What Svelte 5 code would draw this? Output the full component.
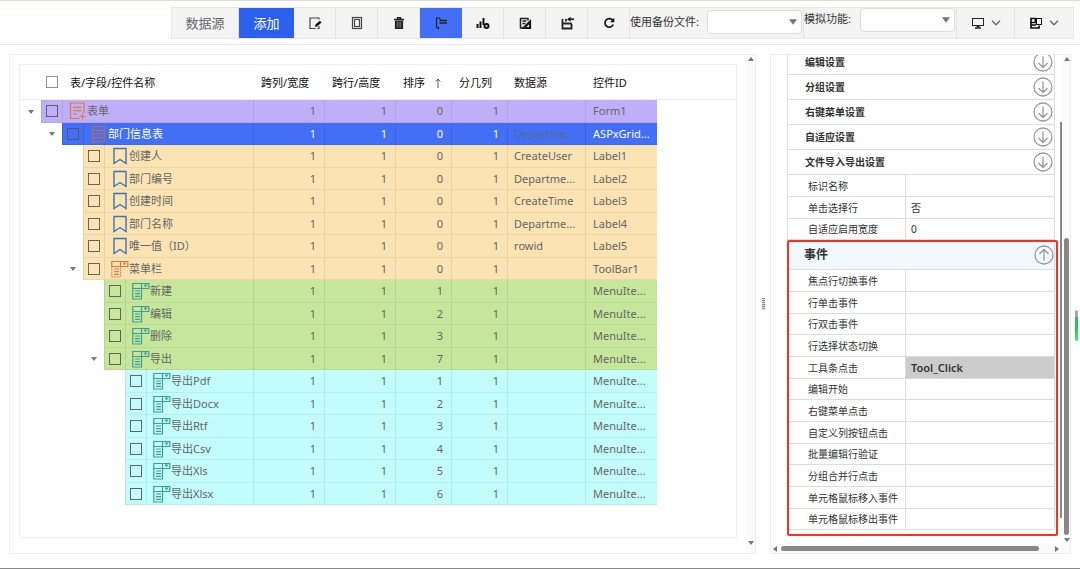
<script lang="ts">
  type Row = {
    level: number;
    icon: string;
    name: string;
    tone: string;
    order: number;
    source?: string;
    id: string;
    open?: boolean;
  };

  const rows: Row[] = [
    { level: 0, icon: "form", name: "表单", tone: "purple", order: 0, id: "Form1", open: true },
    { level: 1, icon: "grid", name: "部门信息表", tone: "blue", order: 0, source: "Departme...", id: "ASPxGrid...", open: true },
    { level: 2, icon: "field", name: "创建人", tone: "sand", order: 0, source: "CreateUser", id: "Label1" },
    { level: 2, icon: "field", name: "部门编号", tone: "sand", order: 0, source: "Departme...", id: "Label2" },
    { level: 2, icon: "field", name: "创建时间", tone: "sand", order: 0, source: "CreateTime", id: "Label3" },
    { level: 2, icon: "field", name: "部门名称", tone: "sand", order: 0, source: "Departme...", id: "Label4" },
    { level: 2, icon: "field", name: "唯一值（ID）", tone: "sand", order: 0, source: "rowid", id: "Label5" },
    { level: 2, icon: "bar", name: "菜单栏", tone: "sand", order: 0, id: "ToolBar1", open: true },
    { level: 3, icon: "menu", name: "新建", tone: "green", order: 1, id: "MenuIte..." },
    { level: 3, icon: "menu", name: "编辑", tone: "green", order: 2, id: "MenuIte..." },
    { level: 3, icon: "menu", name: "删除", tone: "green", order: 3, id: "MenuIte..." },
    { level: 3, icon: "menu", name: "导出", tone: "green", order: 7, id: "MenuIte...", open: true },
    { level: 4, icon: "menu", name: "导出Pdf", tone: "cyan", order: 1, id: "MenuIte..." },
    { level: 4, icon: "menu", name: "导出Docx", tone: "cyan", order: 2, id: "MenuIte..." },
    { level: 4, icon: "menu", name: "导出Rtf", tone: "cyan", order: 3, id: "MenuIte..." },
    { level: 4, icon: "menu", name: "导出Csv", tone: "cyan", order: 4, id: "MenuIte..." },
    { level: 4, icon: "menu", name: "导出Xls", tone: "cyan", order: 5, id: "MenuIte..." },
    { level: 4, icon: "menu", name: "导出Xlsx", tone: "cyan", order: 6, id: "MenuIte..." },
  ];

  const sections = ["编辑设置", "分组设置", "右键菜单设置", "自适应设置", "文件导入导出设置"];

  const settings = [
    { name: "标识名称", value: "" },
    { name: "单击选择行", value: "否" },
    { name: "自适应启用宽度", value: "0" },
  ];

  const events = [
    { name: "焦点行切换事件", value: "" },
    { name: "行单击事件", value: "" },
    { name: "行双击事件", value: "" },
    { name: "行选择状态切换", value: "" },
    { name: "工具条点击", value: "Tool_Click" },
    { name: "编辑开始", value: "" },
    { name: "右键菜单点击", value: "" },
    { name: "自定义列按钮点击", value: "" },
    { name: "批量编辑行验证", value: "" },
    { name: "分组合并行点击", value: "" },
    { name: "单元格鼠标移入事件", value: "" },
    { name: "单元格鼠标移出事件", value: "" },
  ];

  const tools = ["edit", "frame", "trash", "tree", "chart", "design", "export", "refresh"];
</script>

{#snippet toolIcon(name: string)}
  <svg width="14" height="14" viewBox="0 0 14 14" fill="none" stroke="#222" stroke-width="1.2">
    {#if name === "edit"}
      <path d="M11 3.5V2H2v10.5h5.500M11 10v2.500H9.500" stroke="#444" />
      <path d="M7 11l.7-2.800L11.800 4.800l1.700 1.700-4 3.700z" fill="#111" stroke="none" />
    {:else if name === "frame"}
      <rect x="2.5" y="1.5" width="9" height="11" stroke="#444" />
      <rect x="4.5" y="3.5" width="5" height="7" stroke="#444" />
    {:else if name === "trash"}
      <path d="M2 3.5h10M5.500 3V1.800h3V3" stroke-width="1.400" />
      <path d="M3.500 5h7v7.500h-7z" fill="#222" />
      <path d="M5.300 5.500v6M7 5.500v6M8.700 5.500v6" stroke="#aaa" stroke-width=".6" />
    {:else if name === "tree"}
      <path d="M2.500 1.500v10.500M2.500 2h3l1 1.500" />
      <path d="M5.500 4.500h7.500M5.500 7h7.500" stroke-width="1.400" />
      <path d="M5 10.500v3L3 12z" fill="#111" stroke="none" />
    {:else if name === "chart"}
      <path d="M1.500 8v4M4.500 5.500V12M7.500 2v7" stroke="#111" stroke-width="2" />
      <circle cx="10.500" cy="10" r="2" stroke="#111" stroke-width="2" />
    {:else if name === "design"}
      <path d="M2.500 2v10h4M2 2.500h8v2M4.500 5h4M4.500 7.500h3" stroke-width="1.500" />
      <path d="M12.500 4.500v8H4.500z" fill="#222" stroke="#111" />
      <path d="M11 8.500V11H8.500z" fill="#fff" stroke="none" />
    {:else if name === "export"}
      <path d="M2.500 3v9.500h9V7.500M2.500 7.500h9M6 3v2.500" stroke-width="1.800" />
      <path d="M14 3.200H9" stroke-width="1.800" />
      <path d="M7 3.200L10.500.7v5z" fill="#111" stroke="none" />
    {:else}
      <path d="M10.700 4.200a4.300 4.300 0 1 0 .6 4.300" stroke="#111" stroke-width="1.700" />
      <path d="M12.300 1.800v4.500H8z" fill="#111" stroke="none" />
    {/if}
  </svg>
{/snippet}

{#snippet nodeIcon(name: string)}
  <svg class="node {name}" width="18" height="18" viewBox="0 0 18 18" fill="none" stroke="currentColor" stroke-width="1.2">
    {#if name === "form"}
      <path d="M10.500 16.500H1.500V1h13.500v10M4 5.300h8.500M4 8.700h8.500M4 12h4M13.500 11.500v6M10.500 14.500h6" />
    {:else if name === "grid"}
      <path d="M2.500 1.500h12v15h-12zM2.500 5.300h12M2.500 9h12M2.500 12.700h12" />
    {:else if name === "field"}
      <path d="M3 1.500h12v15L9 12.500l-6 4z" stroke-width="1.400" />
    {:else}
      <path d="M.8 1.500h16v5H.8zM9.500 1.500v5" />
      <path d="M11.500 2.500h4l-2 3z" fill="currentColor" stroke="none" />
      <path d="M.8 6.500v10.500h8.700V6.500" stroke-dasharray={name === "bar" ? "1.5 1" : null} />
      <path d="M3 9h5M3 11.700h5M3 14.300h5" />
    {/if}
  </svg>
{/snippet}

{#snippet triangle(dir: string)}
  <svg class="tri {dir}" width="6" height="6" viewBox="0 0 6 6"><path d="M0 1h6L3 5z" fill="#777" /></svg>
{/snippet}

{#snippet chevron()}
  <svg width="10" height="6" viewBox="0 0 10 6"><path d="M1 .8l4 4 4-4" fill="none" stroke="#666" stroke-width="1.3" /></svg>
{/snippet}

{#snippet circleArrow(up: boolean)}
  <svg class:up width="20" height="20" viewBox="0 0 20 20" fill="none" stroke="#999" stroke-width="1.3">
    <circle cx="10" cy="10" r="9" />
    <path d="M10 4.500v11M5.500 11l4.500 4.500 4.500-4.500" />
  </svg>
{/snippet}

{#snippet propTable(list: { name: string; value: string }[])}
  <table class="props">
    <tbody>
      {#each list as item}
        <tr>
          <th scope="row">{item.name}</th>
          <td class:filled={item.value === "Tool_Click"}>{item.value}</td>
        </tr>
      {/each}
    </tbody>
  </table>
{/snippet}

<div class="page">
  <header>
    <div class="toolbar">
      <button class="source">数据源</button>
      <button class="add">添加</button>
      {#each tools as tool}
        <button class="tool" class:active={tool === "tree"} aria-label={tool}>
          {@render toolIcon(tool)}
        </button>
      {/each}
      <div class="picker backup">
        <label for="backup">使用备份文件:</label>
        <span class="select">
          <select id="backup"><option></option></select>
          {@render triangle("down")}
        </span>
      </div>
      <div class="picker simulate">
        <label for="simulate">模拟功能:</label>
        <span class="select">
          <select id="simulate"><option></option></select>
          {@render triangle("down")}
        </span>
      </div>
      <button class="drop" aria-label="screen">
        <svg width="14" height="14" viewBox="0 0 14 14" fill="none" stroke="#222">
          <rect x="1.500" y="2.500" width="11" height="7" />
          <path d="M7 9.500v2" stroke-width="3" />
          <path d="M4 12h6" stroke-width="1.500" />
        </svg>
        {@render chevron()}
      </button>
      <button class="drop" aria-label="layout">
        <svg width="14" height="14" viewBox="0 0 14 14" fill="none" stroke="#111">
          <path d="M2 2.500h4.500v4H2zM2 6.500V12h8V9.500M2 9h5" stroke-width="1.700" />
          <rect x="7.500" y="2.500" width="5" height="6" />
        </svg>
        {@render chevron()}
      </button>
    </div>
  </header>

  <main>
    <section class="panel designer">
      <div class="sheet">
        <table class="tree">
          <colgroup>
            {#each Array(6) as _}<col class="step" />{/each}
            <col class="name" />
            <col class="span" />
            <col class="span" />
            <col class="small" />
            <col class="small" />
            <col class="source" />
            <col class="id" />
            <col />
          </colgroup>
          <thead>
            <tr>
              <th></th>
              <th class="check"><input type="checkbox" aria-label="全选" /></th>
              <th colspan="5">表/字段/控件名称</th>
              <th>跨列/宽度</th>
              <th>跨行/高度</th>
              <th>
                <span class="sorted">
                  排序
                  <svg width="6" height="10" viewBox="0 0 6 10"><path d="M3 10V1M.7 3.500L3 1l2.300 2.500" fill="none" stroke="#555" /></svg>
                </span>
              </th>
              <th>分几列</th>
              <th class="from">数据源</th>
              <th>控件ID</th>
              <th></th>
            </tr>
          </thead>
          <tbody>
            {#each rows as row}
              <tr class={row.tone}>
                {#if row.level > 0}<td class="blank" colspan={row.level}></td>{/if}
                <td class="blank toggle">
                  {#if row.open}
                    <button aria-label="收起{row.name}">{@render triangle("down")}</button>
                  {/if}
                </td>
                <td class="check"><input type="checkbox" aria-label={row.name} /></td>
                <td class="title" colspan={5 - row.level}>
                  <div>{@render nodeIcon(row.icon)}{row.name}</div>
                </td>
                <td class="num">1</td>
                <td class="num">1</td>
                <td class="num">{row.order}</td>
                <td class="num">1</td>
                <td class="from">{row.source ?? ""}</td>
                <td>{row.id}</td>
                <td class="blank"></td>
              </tr>
            {/each}
          </tbody>
        </table>
      </div>
      <div class="scroll">
        {@render triangle("up")}
        {@render triangle("down")}
      </div>
    </section>

    <div class="splitter"><i></i></div>

    <section class="panel inspector">
      <div class="body">
        {#each sections as section}
          <button class="section">{section}{@render circleArrow(false)}</button>
        {/each}
        {@render propTable(settings)}
        <div class="events">
          <button class="section open">事件{@render circleArrow(true)}</button>
          {@render propTable(events)}
        </div>
      </div>
      <div class="inner"><i></i></div>
      <div class="scroll">
        {@render triangle("up")}
        <i></i>
        {@render triangle("down")}
      </div>
      <div class="scroll wide">
        {@render triangle("left")}
        <i></i>
        {@render triangle("right")}
      </div>
    </section>
  </main>
  <div class="meter"></div>
</div>

<style>
  :global(body) {
    background: #fff;
  }
  .page {
    position: relative;
    display: flex;
    flex-direction: column;
    min-height: 100vh;
    box-sizing: border-box;
    border-top: 1px solid #e4d9d5;
    border-bottom: 1px solid #888;
    font-family: "Noto Sans", "Noto Sans CJK SC", sans-serif;
    font-size: 11px;
    line-height: 16px;
    color: #666;
  }
  button {
    font: inherit;
    color: inherit;
    border: 0;
    padding: 0;
    background: none;
  }
  svg {
    display: block;
    flex: none;
  }
  .tri.up { transform: rotate(180deg); }
  .tri.left { transform: rotate(90deg); }
  .tri.right { transform: rotate(-90deg); }

  header {
    display: flex;
    justify-content: flex-end;
    padding: 6px 6px 5px;
    border-bottom: 1px solid #e8e8e8;
  }
  .toolbar {
    display: flex;
    height: 32px;
    box-sizing: border-box;
    background: #f4f4f4;
    border: 1px solid #e8e8e8;

    &>button {
      display: flex;
      align-items: center;
      justify-content: center;
      box-sizing: border-box;
      border-right: 1px solid #e4e4e4;
    }
    &>.source {
      width: 67px;
      font-size: 13px;
    }
    &>.add {
      width: 55px;
      font-size: 13px;
      color: #fff;
      background: #2b60ee;
      border: 0;
    }
    &>.tool {
      width: 42px;
    }
    &>.active {
      background: #426ff6;
      border: 0;
    }
    &>.drop {
      width: 58px;
      gap: 6px;
    }
    &>.drop:last-child {
      border: 0;
    }
  }
  .picker {
    display: flex;
    justify-content: space-between;
    align-items: flex-start;
    box-sizing: border-box;
    color: #333;
    border-right: 1px solid #e4e4e4;
    padding-right: 1px;

    & label {
      padding-top: 3px;
    }
  }
  .backup {
    width: 174px;
    padding-top: 2px;

    & label {
      padding-top: 4px;
    }
  }
  .simulate {
    width: 153px;
  }
  .select {
    display: grid;
    align-items: center;

    &>select, &>:global(svg) {
      grid-area: 1 / 1;
    }
    &>:global(svg) {
      justify-self: end;
      margin-right: 5px;
      width: 8px;
      height: 8px;
      pointer-events: none;
    }
  }
  select {
    appearance: none;
    width: 95px;
    height: 24px;
    margin: 0;
    border: 1px solid #ddd;
    border-radius: 4px;
    background: #fff;
  }

  main {
    flex: 1;
    display: flex;
    padding: 9px 9px 14px;
  }
  .panel {
    border: 1px solid #eee;
    box-sizing: border-box;
  }
  .designer {
    flex: 1;
    display: flex;
  }
  .sheet {
    flex: 1;
    margin: 9px 9px 15px;
    border: 1px solid #f0f0f0;
  }
  .scroll {
    display: flex;
    flex-direction: column;
    justify-content: space-between;
    align-items: center;
    padding: 1px 0 7px;
    background: #fafafa;

    &>i {
      background: #888;
      border-radius: 3px;
    }
  }
  .designer>.scroll {
    width: 9px;
  }

  .tree {
    width: 100%;
    table-layout: fixed;
    border-spacing: 0;

    & .step { width: 21px; }
    & .name { width: 107px; }
    & .span { width: 71px; }
    & .small { width: 56px; }
    & .source { width: 78px; }
    & .id { width: 72px; }

    & th {
      height: 35px;
      padding: 2px 0 0 8px;
      box-sizing: border-box;
      border-bottom: 1px solid #eee;
      text-align: left;
      font-weight: 400;
      color: #111;
      white-space: nowrap;
    }
    & td {
      height: 23px;
      box-sizing: border-box;
      padding: 0 0 0 7px;
      border-left: 1px solid rgba(0, 0, 0, .07);
      border-bottom: 1px solid rgba(0, 0, 0, .06);
      background: var(--tone);
      white-space: nowrap;
    }
    & tr:nth-child(even) td {
      height: 22px;
    }
    & .check, & td.toggle {
      padding: 0;
      text-align: center;
    }
    & td.blank {
      background: none;
      border: 0;
    }
    & td.num {
      padding: 0 8px 0 0;
      text-align: right;
    }
    & td.title {
      padding: 0 0 0 6px;
    }
    & th.from {
      padding-left: 7px;
    }
    & td.from {
      padding-left: 6px;
    }
  }
  .title>div {
    display: flex;
    align-items: center;
    height: 18px;
  }
  .toggle>button {
    display: flex;
    margin: auto;
  }
  .sorted {
    display: flex;
    align-items: center;
    gap: 10px;
  }
  .purple { --tone: #bfaff9; }
  .blue { --tone: #426ff6; }
  .sand { --tone: #fbe3b3; }
  .green { --tone: #c6e79b; }
  .cyan { --tone: #c2fdfb; }
  .blue>td {
    color: #fff;

    &.from {
      color: #59688f;
    }
  }
  .form, .bar { color: #e27a3f; }
  .grid { color: #b66a5c; }
  .field { color: #3c74b8; }
  .menu { color: #3f9f97; }

  input {
    appearance: none;
    display: block;
    width: 12px;
    height: 12px;
    margin: auto;
    border: 1px solid #555;
    opacity: .9;
  }
  th>input {
    border-color: #888;
  }

  .splitter {
    width: 14px;
    display: grid;
    place-items: center;

    &>i {
      width: 3px;
      height: 12px;
      background: repeating-linear-gradient(#888 0 1px, #ddd 1px 2px);
    }
  }

  .inspector {
    width: 301px;
    display: grid;
    grid-template: 1fr 9px / 1fr 5px 7px;
  }
  .body {
    overflow: clip;
    margin-left: 16px;
    font-size: 10px;
    color: #333;
  }
  .section {
    display: flex;
    align-items: center;
    justify-content: space-between;
    width: calc(100% - 3px);
    height: 25px;
    box-sizing: border-box;
    padding: 0 1px 0 17px;
    border: solid #ddd;
    border-width: 0 1px 1px;
    font-weight: 600;

    &:first-child {
      margin-top: -5px;
    }
    & .up {
      transform: rotate(180deg);
    }
    &.open {
      margin: 0;
      height: 30px;
      padding: 0 0 0 16px;
      background: #f1f9fd;
      font-size: 12px;
    }
  }
  .props {
    width: calc(100% - 3px);
    table-layout: fixed;
    border-spacing: 0;
    border-left: 1px solid #ddd;

    & th, & td {
      height: 22px;
      box-sizing: border-box;
      padding: 0;
      line-height: 14px;
      text-align: left;
      font-weight: 400;
      border-right: 1px solid #ddd;
      border-bottom: 1px solid #ddd;
    }
    & tr:nth-child(3n) > * {
      height: 21px;
    }
    & th {
      width: 118px;
      padding-left: 20px;
      white-space: nowrap;
    }
    & td {
      padding-left: 5px;
    }
    & .filled {
      background: #ccc;
      font-size: 11px;
      font-weight: 600;
    }
  }
  .events {
    position: relative;

    &::after {
      content: "";
      position: absolute;
      inset: 0 0 -6px;
      border: 2px solid #fa3024;
      border-radius: 2px;
      pointer-events: none;
    }
  }
  .inner {
    display: flex;
    justify-content: center;
    padding: 67px 0 26px;

    &>i {
      width: 2px;
      background: #888;
    }
  }
  .inspector>.scroll {
    padding: 1px 0;

    &>i {
      width: 5px;
      flex: 0 0 61%;
      margin-top: auto;
      margin-bottom: 2px;
    }
  }
  .inspector>.wide {
    grid-column: 1 / -1;
    flex-direction: row;
    justify-content: flex-start;
    padding: 0 10px 0 1px;

    &>i {
      flex: 0 0 258px;
      height: 5px;
      margin: 0 auto 0 3px;
    }
  }
  /* activity meter floats on the window edge */
  .meter {
    position: absolute;
    top: 309px;
    right: 2px;
    width: 3px;
    height: 31px;
    border-radius: 2px;
    background: linear-gradient(#aaa 0 7px, #1fc86a 7px 20px, #5be07a);
  }
</style>
